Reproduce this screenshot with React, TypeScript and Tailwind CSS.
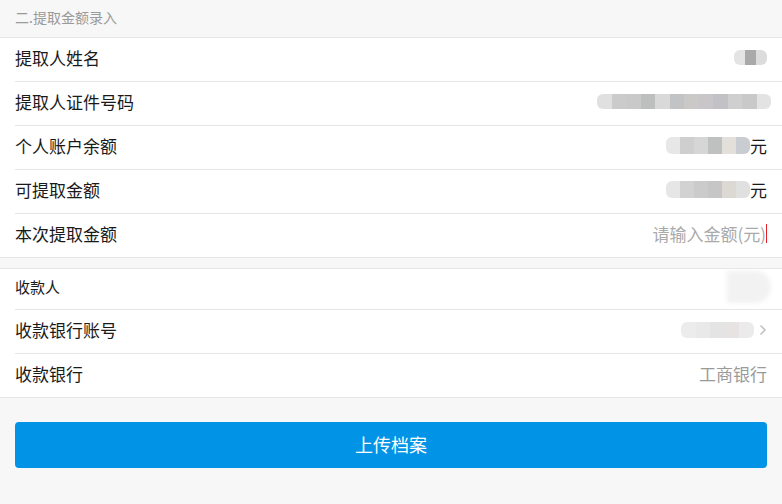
import React from "react";

const font = { fontFamily: '"Noto Sans CJK SC", "Noto Sans", sans-serif' };

// mosaic blocks used for masked values
function Mosaic({ cells, h = "h-[16px]", w = "w-[14px]" }: { cells: string[]; h?: string; w?: string }) {
  return (
    <div className={`flex ${h} overflow-hidden rounded-[6px] blur-[0.6px]`}>
      {cells.map((c, i) => (
        <div key={i} className={`${c} ${w} h-full`} />
      ))}
    </div>
  );
}

function Row({
  label,
  children,
  last,
  small,
  h = "h-[44px]",
}: {
  label: string;
  children?: React.ReactNode;
  last?: boolean;
  small?: boolean;
  h?: string;
}) {
  return (
    <div className="pl-[15px] bg-white">
      <div
        className={`flex items-center justify-between pr-[15px] pb-[4px] ${h} ${
          last ? "" : "border-b border-[#e6e6e6]"
        }`}
      >
        <span className={`${small ? "text-[15px]" : "text-[17px]"} text-[#1a1a1a]`}>{label}</span>
        <div className="flex items-center">{children}</div>
      </div>
    </div>
  );
}

export default function App() {
  return (
    <div className="w-[782px] h-[504px] bg-[#f7f7f7] overflow-hidden" style={font}>
      <div className="h-[38px] flex items-center px-[15px] pb-[3px] text-[14px] text-[#9a9a9a] border-b border-[#e6e6e6]">
        二.提取金额录入
      </div>

      <div className="border-b border-[#e6e6e6]">
        <Row label="提取人姓名">
          <Mosaic w="w-[11px]" cells={["bg-[#e4e4e4]", "bg-[#a9a9a9]", "bg-[#dcdcdc]"]} h="h-[15px]" />
        </Row>
        <Row label="提取人证件号码">
          <div className="mr-[-4px]">
            <Mosaic
              h="h-[15px]"
              w="w-[14.5px]"
              cells={[
                "bg-[#e0e0e0]",
                "bg-[#cbcbcb]",
                "bg-[#c9c9c9]",
                "bg-[#bdbfbf]",
                "bg-[#d8d9d8]",
                "bg-[#c2c3c5]",
                "bg-[#cbc9c8]",
                "bg-[#c8c6c9]",
                "bg-[#c2c1c6]",
                "bg-[#cfcfcf]",
                "bg-[#c9c9c9]",
                "bg-[#e3e3e3]",
              ]}
            />
          </div>
        </Row>
        <Row label="个人账户余额">
          <Mosaic
            h="h-[17px]"
            cells={["bg-[#e6e7e6]", "bg-[#cfcfcf]", "bg-[#d6d6d6]", "bg-[#bfc1c0]", "bg-[#e3dfdb]", "bg-[#c9ccd1]"]}
          />
          <span className="text-[17px] text-[#1a1a1a]">元</span>
        </Row>
        <Row label="可提取金额">
          <Mosaic
            h="h-[17px]"
            cells={["bg-[#e6e6e6]", "bg-[#d2d2d2]", "bg-[#cbcbcb]", "bg-[#c6c6c6]", "bg-[#dcd8d4]", "bg-[#e0e0e0]"]}
          />
          <span className="text-[17px] text-[#1a1a1a]">元</span>
        </Row>
        <Row label="本次提取金额" last h="h-[43px]">
          <span className="text-[17px] text-[#aaaaaa]">请输入金额(元)</span>
          <span className="w-px h-[19px] bg-[#e8202a]" />
        </Row>
      </div>

      <div className="h-[10px]" />

      <div className="border-y border-[#e6e6e6]">
        <Row label="收款人" small h="h-[41px]">
          <div className="w-[44px] h-[32px] rounded-r-[16px] bg-[#f2f2f2] blur-[2px] mr-[-4px]" />
        </Row>
        <Row label="收款银行账号">
          <Mosaic
            h="h-[16px]"
            w="w-[14.6px]"
            cells={["bg-[#ececec]", "bg-[#e9e9e9]", "bg-[#e4e4e4]", "bg-[#e6e3e2]", "bg-[#ebebeb]"]}
          />
          <svg width="8" height="12" viewBox="0 0 8 12" className="ml-[5px]">
            <path d="M1.5 1.5 L6 6 L1.5 10.5" fill="none" stroke="#c4c4c4" strokeWidth="1.6" />
          </svg>
        </Row>
        <Row label="收款银行" last h="h-[43px]">
          <span className="text-[17px] text-[#9a9a9a]">工商银行</span>
        </Row>
      </div>

      <div className="px-[15px] pt-[24px]">
        <button className="w-full h-[46px] pb-[2px] rounded-[4px] bg-[#0093e6] text-white text-[18px]">
          上传档案
        </button>
      </div>
    </div>
  );
}
